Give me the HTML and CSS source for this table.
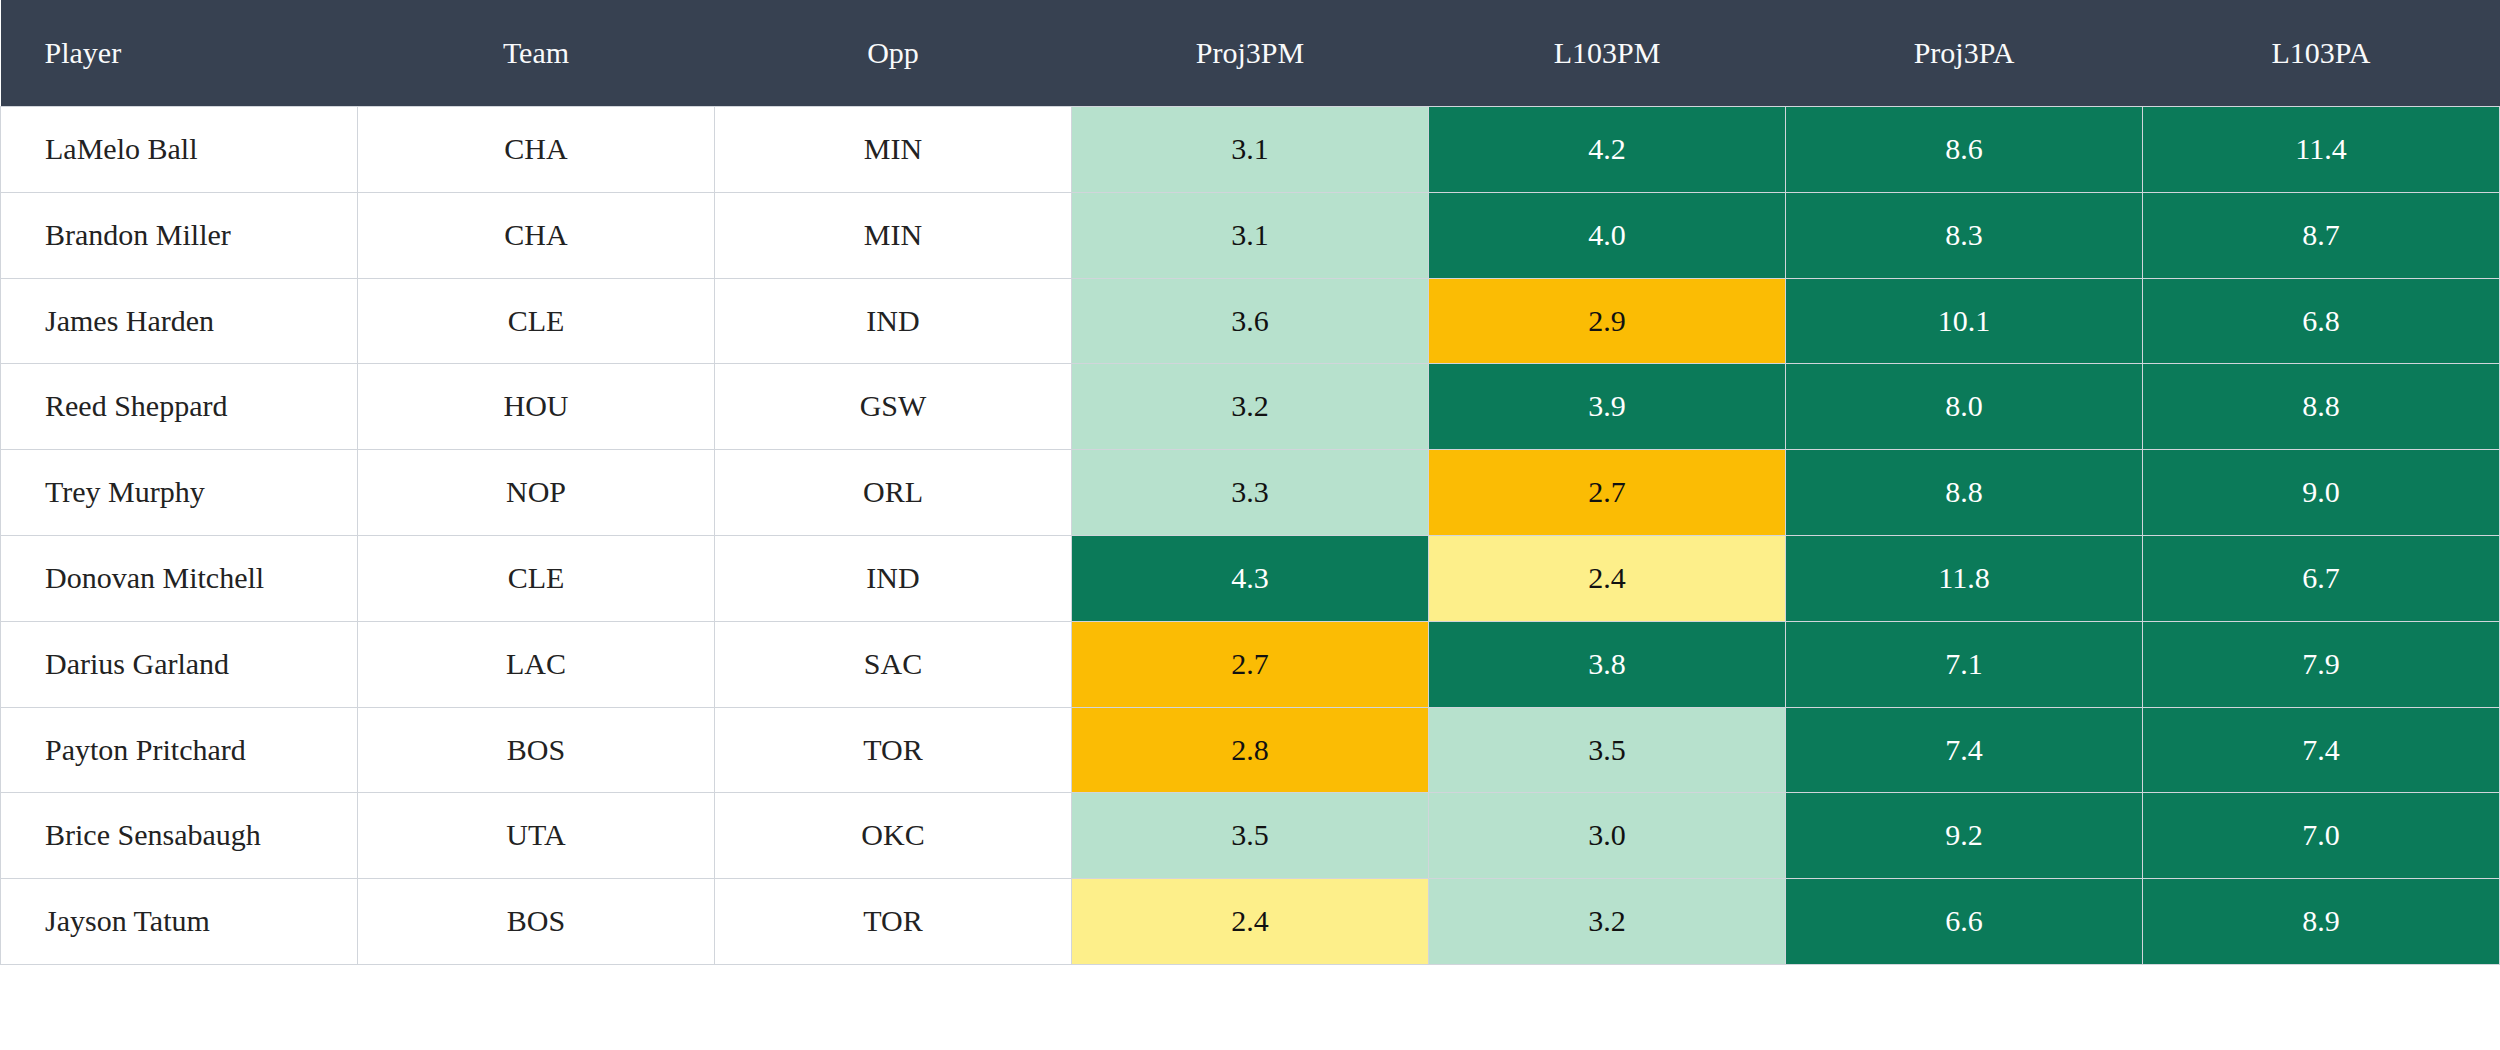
FILE: index.html
```html
<!DOCTYPE html>
<html>
<head>
<meta charset="utf-8">
<link rel="stylesheet" href="styles.css">
</head>
<body>
<table class="grid">
  <thead>
    <tr>
      <th class="left">Player</th><th>Team</th><th>Opp</th><th>Proj3PM</th><th>L103PM</th><th>Proj3PA</th><th>L103PA</th>
    </tr>
  </thead>
  <tbody>
    <tr><td class="left">LaMelo Ball</td><td>CHA</td><td>MIN</td><td class="lg">3.1</td><td class="dg">4.2</td><td class="dg">8.6</td><td class="dg">11.4</td></tr>
    <tr><td class="left">Brandon Miller</td><td>CHA</td><td>MIN</td><td class="lg">3.1</td><td class="dg">4.0</td><td class="dg">8.3</td><td class="dg">8.7</td></tr>
    <tr><td class="left">James Harden</td><td>CLE</td><td>IND</td><td class="lg">3.6</td><td class="or">2.9</td><td class="dg">10.1</td><td class="dg">6.8</td></tr>
    <tr><td class="left">Reed Sheppard</td><td>HOU</td><td>GSW</td><td class="lg">3.2</td><td class="dg">3.9</td><td class="dg">8.0</td><td class="dg">8.8</td></tr>
    <tr><td class="left">Trey Murphy</td><td>NOP</td><td>ORL</td><td class="lg">3.3</td><td class="or">2.7</td><td class="dg">8.8</td><td class="dg">9.0</td></tr>
    <tr><td class="left">Donovan Mitchell</td><td>CLE</td><td>IND</td><td class="dg">4.3</td><td class="ly">2.4</td><td class="dg">11.8</td><td class="dg">6.7</td></tr>
    <tr><td class="left">Darius Garland</td><td>LAC</td><td>SAC</td><td class="or">2.7</td><td class="dg">3.8</td><td class="dg">7.1</td><td class="dg">7.9</td></tr>
    <tr><td class="left">Payton Pritchard</td><td>BOS</td><td>TOR</td><td class="or">2.8</td><td class="lg">3.5</td><td class="dg">7.4</td><td class="dg">7.4</td></tr>
    <tr><td class="left">Brice Sensabaugh</td><td>UTA</td><td>OKC</td><td class="lg">3.5</td><td class="lg">3.0</td><td class="dg">9.2</td><td class="dg">7.0</td></tr>
    <tr><td class="left">Jayson Tatum</td><td>BOS</td><td>TOR</td><td class="ly">2.4</td><td class="lg">3.2</td><td class="dg">6.6</td><td class="dg">8.9</td></tr>
  </tbody>
</table>
</body>
</html>
```
FILE: styles.css
```css
html, body {
  margin: 0;
  padding: 0;
  background: #ffffff;
}
body {
  font-family: "Liberation Serif", "Times New Roman", serif;
  color: #222222;
}
.grid {
  width: 2500px;
  border-collapse: collapse;
  table-layout: fixed;
}
.grid th {
  background: #374151;
  color: #f9fafb;
  font-weight: normal;
  font-size: 30px;
  line-height: 34px;
  padding: 36px 44px;
  text-align: center;
  border-bottom: 1px solid #d1d5db;
}
.grid td {
  font-size: 30px;
  line-height: 32.8px;
  padding: 26px 44px;
  text-align: center;
  border: 1px solid #d1d5db;
}
.grid .left {
  text-align: left;
}
.lg {
  background: #b7e1cd;
  color: #111111;
}
.dg {
  background: #0b7a59;
  color: #ffffff;
}
.or {
  background: #fbbc04;
  color: #111111;
}
.ly {
  background: #fdef8a;
  color: #111111;
}
```
